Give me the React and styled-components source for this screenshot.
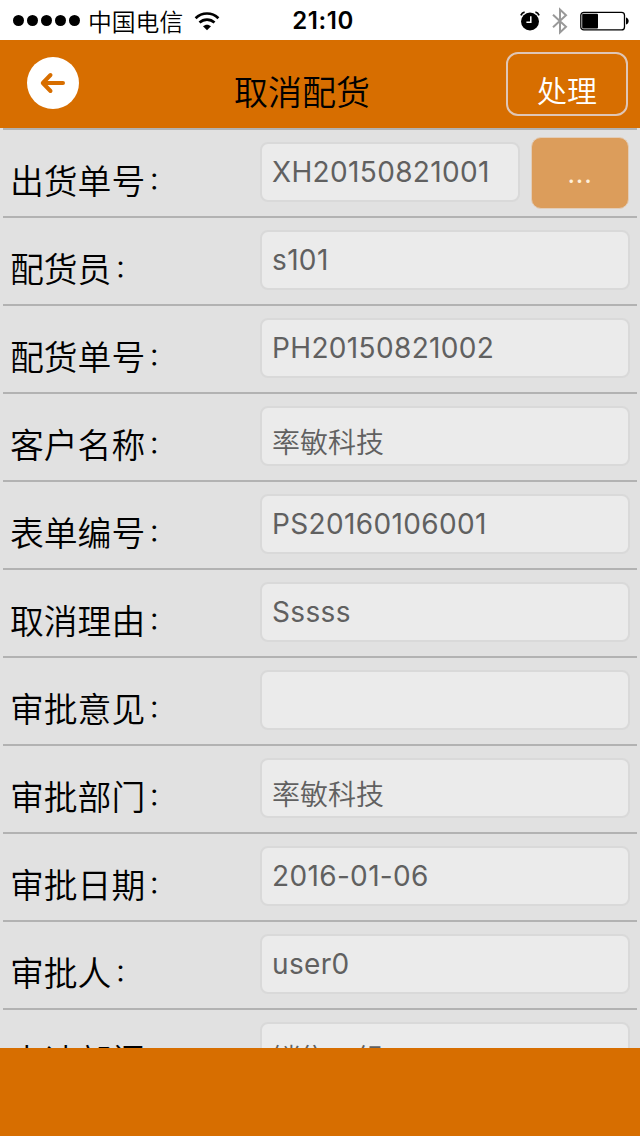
import React from "react";
import styled, { createGlobalStyle } from "styled-components";

const GlobalStyle = createGlobalStyle`
  * { box-sizing: border-box; }
  body { margin: 0; background: #e1e1e1; font-family: Inter, "Noto Sans CJK SC", sans-serif; }
`;

const Screen = styled.div`
  display: flex;
  flex-direction: column;
  width: 640px;
  height: 1136px;
  overflow: hidden;
  background: #e1e1e1;
`;

const StatusBar = styled.div`
  display: grid;
  grid-template-columns: 1fr auto 1fr;
  align-items: center;
  height: 40px;
  flex: none;
  padding: 0 11px 0 13px;
  background: #fff;
  color: #000;
`;

const StatusLeft = styled.div`
  display: flex;
  align-items: center;
`;

const Signal = styled.div`
  display: flex;
  gap: 3px;
  margin-right: 8px;
`;

const Dot = styled.i`
  width: 11px;
  height: 11px;
  border-radius: 50%;
  background: #000;
`;

const Carrier = styled.span`
  font: 350 23.8px/38px "Noto Sans CJK SC", sans-serif;
  margin-right: 11px;
`;

const Clock = styled.span`
  font: 600 24px/40px Inter, sans-serif;
  letter-spacing: 0.6px;
  padding: 1px 0 0 4px;
`;

const StatusRight = styled.div`
  display: flex;
  align-items: center;
  justify-content: flex-end;
`;

const Header = styled.header`
  display: grid;
  grid-template-columns: 134px 1fr 134px;
  height: 88px;
  flex: none;
  background: #d76e00;
`;

const BackButton = styled.button`
  width: 52px;
  height: 52px;
  margin: 17px 0 0 27px;
  padding: 0;
  border: 0;
  border-radius: 50%;
  background: #fff;
  svg { display: block; }
`;

const Title = styled.h1`
  margin: 0;
  padding: 26px 36px 0 0;
  text-align: center;
  font: 350 34px/50px "Noto Sans CJK SC", sans-serif;
  color: #000;
`;

const ActionButton = styled.button`
  width: 122px;
  height: 64px;
  margin-top: 12px;
  padding: 10px 0 0;
  border: 2px solid #dfc6b6;
  border-radius: 12px;
  background: transparent;
  color: #fff;
  font: 350 30px/46px "Noto Sans CJK SC", sans-serif;
`;

const Form = styled.main`
  flex: 1;
  min-height: 0;
  overflow: hidden;
  padding: 0 3px;
`;

const Row = styled.div`
  display: flex;
  height: 88px;
  border-top: 2px solid #b2b2b2;
  padding-right: 7px;
`;

const Label = styled.label`
  display: flex;
  width: 257px;
  flex: none;
  padding: 25px 0 0 7px;
  font: 350 33.8px/50px "Noto Sans CJK SC", sans-serif;
  color: #000;
`;

const Colon = styled.span`
  padding-left: 3px;
  font-size: 24px;
  font-weight: 400;
  line-height: 47px;
`;

const Field = styled.div`
  flex: 1;
  height: 60px;
  margin-top: 12px;
  padding: ${(p) => (p.$cjk ? "12px" : "0")} 0 0 10px;
  border: 2px solid #d9d9d9;
  border-radius: 8px;
  background: #ebebeb;
  color: #606060;
  font-family: Inter, "Noto Sans CJK SC", sans-serif;
  font-size: 28px;
  font-weight: ${(p) => (p.$cjk ? 350 : 400)};
  line-height: ${(p) => (p.$cjk ? "46px" : "57px")};
  letter-spacing: ${(p) => (p.$cjk ? "0" : "0.35px")};
  white-space: nowrap;
`;

const MoreButton = styled.button`
  width: 98px;
  height: 72px;
  flex: none;
  margin: 7px 1px 0 11px;
  padding: 2px 0 0;
  border: 1px solid #e2cdb9;
  border-radius: 10px;
  background: #dc9d5b;
  color: #fff0dc;
  font: 400 26px/50px Inter, sans-serif;
  letter-spacing: 0.8px;
`;

const Footer = styled.footer`
  height: 88px;
  flex: none;
  background: #d76e00;
`;

const rows = [
  { label: "出货单号", value: "XH20150821001", more: true },
  { label: "配货员", value: "s101" },
  { label: "配货单号", value: "PH20150821002" },
  { label: "客户名称", value: "率敏科技", cjk: true },
  { label: "表单编号", value: "PS20160106001" },
  { label: "取消理由", value: "Sssss" },
  { label: "审批意见", value: "" },
  { label: "审批部门", value: "率敏科技", cjk: true },
  { label: "审批日期", value: "2016-01-06" },
  { label: "审批人", value: "user0" },
  { label: "申请部门", value: "销售一组", cjk: true },
];

const WifiIcon = () => (
  <svg width="26" height="20" viewBox="0 0 26 20" fill="none" stroke="#000" strokeWidth="2.7">
    <path d="M1.6 7.2C8 .9 18 .9 24.4 7.2M5.5 11.6c4.3-4 10.7-4 15 0" />
    <path d="M13 19.2 9 15.2c2.4-2.1 5.6-2.1 8 0z" fill="#000" stroke="none" />
  </svg>
);

const AlarmIcon = () => (
  <svg width="20" height="20" viewBox="0 0 20 20" fill="none">
    <circle cx="10" cy="10.5" r="9" fill="#000" />
    <path d="M.9 4.4C1.6 2.7 2.9 1.5 4.6 1.2M15.4 1.2c1.7.3 3 1.5 3.7 3.2" stroke="#000" strokeWidth="1.7" />
    <path d="M10.8 5.2v6H6.4" stroke="#fff" strokeWidth="1.5" />
  </svg>
);

const BluetoothIcon = styled(({ className }) => (
  <svg className={className} width="16" height="28" viewBox="0 0 16 28" fill="none" stroke="#999" strokeWidth="2">
    <path d="M1 7.8 14 19.7 8 25.4V2.6l6 5.7L1 20.2" />
  </svg>
))`
  margin: 0 12px 0 12px;
`;

const BatteryIcon = () => (
  <svg width="49" height="20" viewBox="0 0 49 20">
    <rect x=".8" y="1.3" width="43.7" height="17.6" rx="3" fill="#fff" stroke="#000" strokeWidth="1.3" />
    <rect x="2.2" y="2.8" width="15.8" height="14.6" rx="1" />
    <path d="M46 6.6c3.6 1 3.6 6 0 7z" />
  </svg>
);

const BackArrow = () => (
  <svg width="52" height="52" viewBox="0 0 52 52" fill="none" stroke="#d76e00" strokeWidth="4" strokeLinecap="round" strokeLinejoin="round">
    <path d="M36 26H16M23.5 18 15.8 26l7.7 8" />
  </svg>
);

export default function App() {
  return (
    <Screen>
      <GlobalStyle />
      <StatusBar>
        <StatusLeft>
          <Signal>
            {[0, 1, 2, 3, 4].map((i) => (
              <Dot key={i} />
            ))}
          </Signal>
          <Carrier>中国电信</Carrier>
          <WifiIcon />
        </StatusLeft>
        <Clock>21:10</Clock>
        <StatusRight>
          <AlarmIcon />
          <BluetoothIcon />
          <BatteryIcon />
        </StatusRight>
      </StatusBar>
      <Header>
        <BackButton aria-label="返回">
          <BackArrow />
        </BackButton>
        <Title>取消配货</Title>
        <ActionButton>处理</ActionButton>
      </Header>
      <Form>
        {rows.map((row) => (
          <Row key={row.label}>
            <Label>
              {row.label}
              <Colon>：</Colon>
            </Label>
            <Field $cjk={row.cjk}>{row.value}</Field>
            {row.more && <MoreButton>...</MoreButton>}
          </Row>
        ))}
      </Form>
      <Footer />
    </Screen>
  );
}
